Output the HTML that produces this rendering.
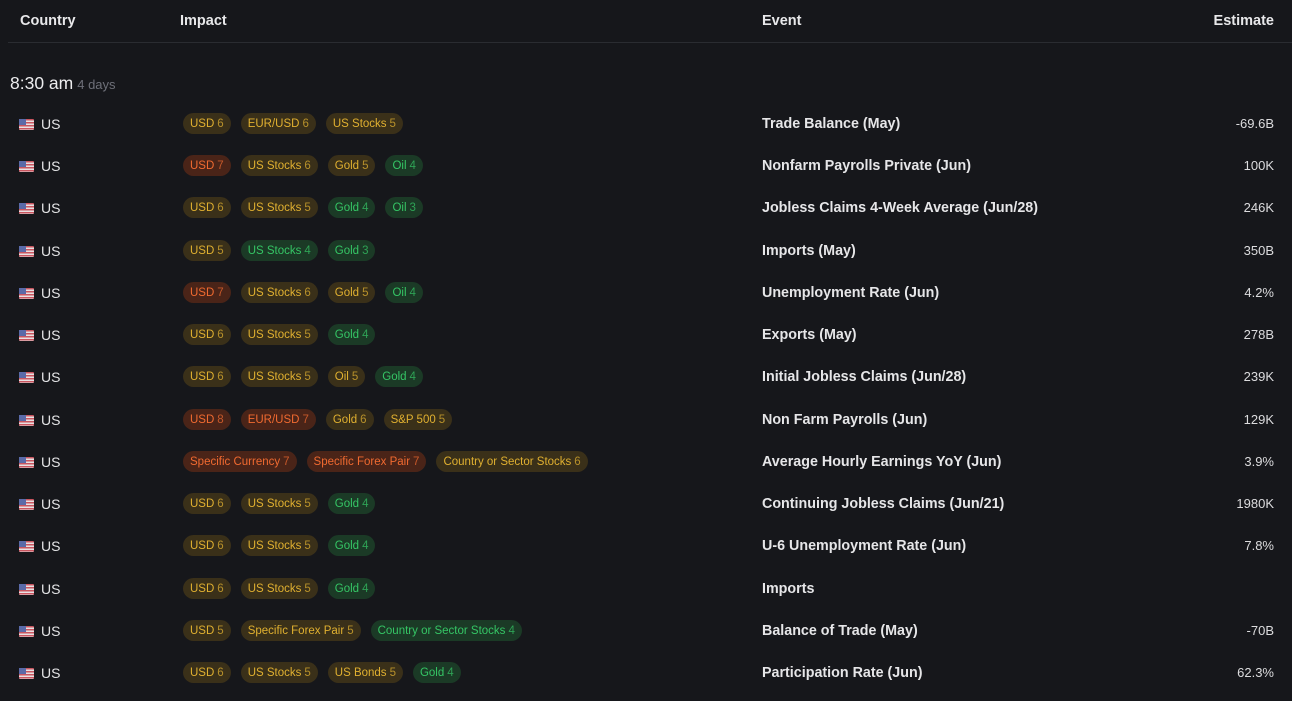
<!DOCTYPE html>
<html><head><meta charset="utf-8"><style>
*{margin:0;padding:0;box-sizing:border-box}
body{width:1292px;height:701px;background:#16171b;font-family:"Liberation Sans",sans-serif;color:#e4e4e6;overflow:hidden;position:relative}
.h{position:absolute;top:13px;font-size:14.5px;font-weight:bold;color:#e8e8ea}
.line{position:absolute;top:42px;left:8px;right:0;height:1px;background:#2a2c31}
.time{position:absolute;left:10px;top:73px;font-size:17.5px;color:#ececee}
.time span{font-size:13px;color:#6e7079;margin-left:4px}
.row{position:absolute;left:0;width:1292px;height:22px}
.c{position:absolute;left:19px;top:3px;font-size:14px;display:flex;align-items:center}
.flag{width:15px;height:11px;margin-right:7px;background:repeating-linear-gradient(#c9555f 0 1.5px,#e8e0e2 1.5px 3px);position:relative;border-radius:1px}
.flag:before{content:"";position:absolute;left:0;top:0;width:7px;height:6px;background:#5a6aa8}
.p{position:absolute;left:183px;top:0;display:flex;gap:10px}
.t{height:21px;display:flex;align-items:center;padding:1px 7px 0;border-radius:11px;font-size:11.5px;white-space:nowrap}
.t i{font-style:normal;opacity:.75;margin-left:3px}
.y{background:#3a3019;color:#e0b030}
.o{background:#4a2418;color:#f06a30}
.g{background:#1b3a26;color:#35c565}
.e{position:absolute;left:762px;top:3px;font-size:14.3px;font-weight:bold;color:#e6e6e8}
.s{position:absolute;right:18px;top:3px;font-size:13px;color:#dcdcde}
</style></head><body>
<div class="h" style="left:20px">Country</div>
<div class="h" style="left:180px">Impact</div>
<div class="h" style="left:762px">Event</div>
<div class="h" style="right:18px">Estimate</div>
<div class="line"></div>
<div class="time">8:30 am<span>4 days</span></div>

<div class="row" style="top:113px"><div class="c"><div class="flag"></div>US</div><div class="p"><div class="t y">USD<i>6</i></div><div class="t y">EUR/USD<i>6</i></div><div class="t y">US Stocks<i>5</i></div></div><div class="e">Trade Balance (May)</div><div class="s">-69.6B</div></div>
<div class="row" style="top:155px"><div class="c"><div class="flag"></div>US</div><div class="p"><div class="t o">USD<i>7</i></div><div class="t y">US Stocks<i>6</i></div><div class="t y">Gold<i>5</i></div><div class="t g">Oil<i>4</i></div></div><div class="e">Nonfarm Payrolls Private (Jun)</div><div class="s">100K</div></div>
<div class="row" style="top:197px"><div class="c"><div class="flag"></div>US</div><div class="p"><div class="t y">USD<i>6</i></div><div class="t y">US Stocks<i>5</i></div><div class="t g">Gold<i>4</i></div><div class="t g">Oil<i>3</i></div></div><div class="e">Jobless Claims 4-Week Average (Jun/28)</div><div class="s">246K</div></div>
<div class="row" style="top:240px"><div class="c"><div class="flag"></div>US</div><div class="p"><div class="t y">USD<i>5</i></div><div class="t g">US Stocks<i>4</i></div><div class="t g">Gold<i>3</i></div></div><div class="e">Imports (May)</div><div class="s">350B</div></div>
<div class="row" style="top:282px"><div class="c"><div class="flag"></div>US</div><div class="p"><div class="t o">USD<i>7</i></div><div class="t y">US Stocks<i>6</i></div><div class="t y">Gold<i>5</i></div><div class="t g">Oil<i>4</i></div></div><div class="e">Unemployment Rate (Jun)</div><div class="s">4.2%</div></div>
<div class="row" style="top:324px"><div class="c"><div class="flag"></div>US</div><div class="p"><div class="t y">USD<i>6</i></div><div class="t y">US Stocks<i>5</i></div><div class="t g">Gold<i>4</i></div></div><div class="e">Exports (May)</div><div class="s">278B</div></div>
<div class="row" style="top:366px"><div class="c"><div class="flag"></div>US</div><div class="p"><div class="t y">USD<i>6</i></div><div class="t y">US Stocks<i>5</i></div><div class="t y">Oil<i>5</i></div><div class="t g">Gold<i>4</i></div></div><div class="e">Initial Jobless Claims (Jun/28)</div><div class="s">239K</div></div>
<div class="row" style="top:409px"><div class="c"><div class="flag"></div>US</div><div class="p"><div class="t o">USD<i>8</i></div><div class="t o">EUR/USD<i>7</i></div><div class="t y">Gold<i>6</i></div><div class="t y">S&amp;P 500<i>5</i></div></div><div class="e">Non Farm Payrolls (Jun)</div><div class="s">129K</div></div>
<div class="row" style="top:451px"><div class="c"><div class="flag"></div>US</div><div class="p"><div class="t o">Specific Currency<i>7</i></div><div class="t o">Specific Forex Pair<i>7</i></div><div class="t y">Country or Sector Stocks<i>6</i></div></div><div class="e">Average Hourly Earnings YoY (Jun)</div><div class="s">3.9%</div></div>
<div class="row" style="top:493px"><div class="c"><div class="flag"></div>US</div><div class="p"><div class="t y">USD<i>6</i></div><div class="t y">US Stocks<i>5</i></div><div class="t g">Gold<i>4</i></div></div><div class="e">Continuing Jobless Claims (Jun/21)</div><div class="s">1980K</div></div>
<div class="row" style="top:535px"><div class="c"><div class="flag"></div>US</div><div class="p"><div class="t y">USD<i>6</i></div><div class="t y">US Stocks<i>5</i></div><div class="t g">Gold<i>4</i></div></div><div class="e">U-6 Unemployment Rate (Jun)</div><div class="s">7.8%</div></div>
<div class="row" style="top:578px"><div class="c"><div class="flag"></div>US</div><div class="p"><div class="t y">USD<i>6</i></div><div class="t y">US Stocks<i>5</i></div><div class="t g">Gold<i>4</i></div></div><div class="e">Imports</div><div class="s"></div></div>
<div class="row" style="top:620px"><div class="c"><div class="flag"></div>US</div><div class="p"><div class="t y">USD<i>5</i></div><div class="t y">Specific Forex Pair<i>5</i></div><div class="t g">Country or Sector Stocks<i>4</i></div></div><div class="e">Balance of Trade (May)</div><div class="s">-70B</div></div>
<div class="row" style="top:662px"><div class="c"><div class="flag"></div>US</div><div class="p"><div class="t y">USD<i>6</i></div><div class="t y">US Stocks<i>5</i></div><div class="t y">US Bonds<i>5</i></div><div class="t g">Gold<i>4</i></div></div><div class="e">Participation Rate (Jun)</div><div class="s">62.3%</div></div>
</body></html>
